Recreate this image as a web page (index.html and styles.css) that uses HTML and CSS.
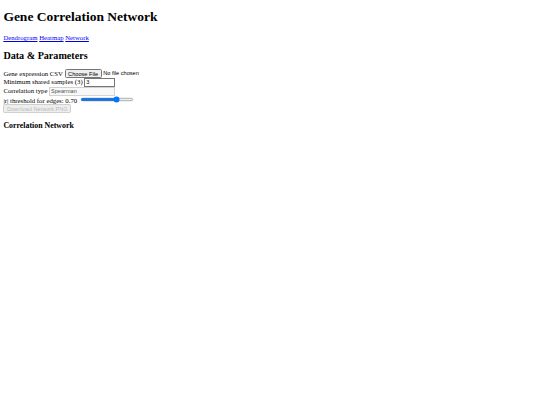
FILE: index.html
```html
<!DOCTYPE html>
<html lang="en">
<head>
<meta charset="utf-8">
<title>Gene Correlation Network</title>
<link rel="stylesheet" href="styles.css">
</head>
<body>
<h1>Gene Correlation Network</h1>
<nav><a href="#dendrogram">Dendrogram</a> <a href="#heatmap">Heatmap</a> <a href="#network">Network</a></nav>
<section class="params">
  <h2>Data &amp; Parameters</h2>
  <div class="row"><label>Gene expression CSV <input type="file" accept=".csv"></label></div>
  <div class="row"><label>Minimum shared samples (3) <input class="num" type="number" value="3" min="1"></label></div>
  <div class="row"><label>Correlation type <input class="txt" type="text" value="Spearman" disabled></label></div>
  <div class="row"><label>|r| threshold for edges: <span class="val">0.70</span> <input type="range" min="0" max="1" step="0.01" value="0.7"></label></div>
  <div class="row"><button type="button" disabled>Download Network PNG</button></div>
</section>
<section class="net">
  <h3>Correlation Network</h3>
</section>
</body>
</html>
```
FILE: styles.css
```css
html {
  background: #fff;
}
body {
  zoom: 0.421875;
  width: max-content;
  font-family: "Liberation Serif", "Times New Roman", serif;
  color: #000;
}
h1 {
  margin-top: 14px;
}
.num {
  width: 64px;
}
.txt {
  width: 148px;
}
```
